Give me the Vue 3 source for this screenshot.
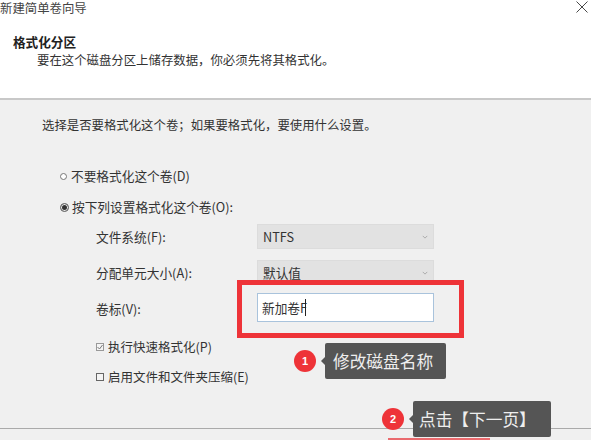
<script setup>
const fields = [
  { label: '文件系统(F):', value: 'NTFS' },
  { label: '分配单元大小(A):', value: '默认值' },
]
</script>

<template>
  <div class="wizard">
    <header class="head">
      <div class="titlebar">
        <span class="title">新建简单卷向导</span>
        <svg class="close" viewBox="0 0 12 12" width="12" height="12"><path d="M.5.5l11 11M11.500.5l-11 11" stroke="#333" stroke-width=".9" fill="none" /></svg>
      </div>
      <h1 class="heading">格式化分区</h1>
      <p class="sub">要在这个磁盘分区上储存数据，你必须先将其格式化。</p>
    </header>

    <main class="body">
      <p class="intro">选择是否要格式化这个卷；如果要格式化，要使用什么设置。</p>

      <div class="option first"><span class="radio"></span>不要格式化这个卷(D)</div>
      <div class="option second"><span class="radio on"></span>按下列设置格式化这个卷(O):</div>

      <div class="form">
        <template v-for="f in fields" :key="f.label">
          <label class="lab">{{ f.label }}</label>
          <div class="select">
            <span>{{ f.value }}</span>
            <svg viewBox="0 0 8 5" width="6" height="4"><path d="M1 1l3 3 3-3" stroke="#999" fill="none" /></svg>
          </div>
        </template>
        <label class="lab">卷标(V):</label>
        <div class="highlight">
          <div class="input">新加卷F<i class="caret"></i></div>
        </div>
      </div>

      <div class="check first-check">
        <span class="box"><svg viewBox="0 0 8 8" width="8" height="8"><path d="M1.500 4l2 2 3-4" stroke="#777" fill="none" /></svg></span>执行快速格式化(P)
      </div>
      <div class="check"><span class="box dark"></span>启用文件和文件夹压缩(E)</div>

      <div class="note n1"><b class="dot">1</b><span class="tip">修改磁盘名称</span></div>
      <div class="note n2"><b class="dot">2</b><span class="tip">点击【下一页】</span></div>
    </main>

    <footer class="foot"><div class="next"></div></footer>
  </div>
</template>

<style scoped>
.wizard {
  width: 591px;
  height: 440px;
  overflow: hidden;
  background: #f0f0f0;
  color: #333;
  font-family: "Noto Sans CJK SC", "Liberation Sans", sans-serif;
  display: flex;
  flex-direction: column;
}
.head {
  height: 98px;
  flex: none;
  background: #fff;
  border-bottom: 2px solid #c8c8c8;
  box-sizing: content-box;
}
.titlebar {
  height: 12px;
  padding-top: 1px;
  display: flex;
  justify-content: space-between;
  align-items: flex-start;
  padding-right: 3px;
}
.title {
  font-size: 12.400px;
  line-height: 14px;
  color: #444;
}
.heading {
  margin: 22px 0 0 13px;
  font-size: 12.600px;
  line-height: 14px;
  font-weight: 700;
  color: #222;
}
.sub {
  margin: 4px 0 0 37px;
  font-size: 12.400px;
  line-height: 14px;
}
.body {
  flex: 1;
  position: relative;
  min-height: 0;
  padding-top: 18px;
}
.intro {
  margin: 0 0 0 42px;
  font-size: 12.400px;
  line-height: 14px;
}
.option {
  display: flex;
  align-items: center;
  margin-left: 60px;
  font-size: 12.700px;
  line-height: 16px;
}
.first { margin-top: 36px; }
.second { margin-top: 15px; }
.radio {
  width: 7px;
  height: 7px;
  border: 1px solid #777;
  border-radius: 50%;
  margin-right: 4px;
  box-sizing: border-box;
  background: #fff;
  flex: none;
}
.radio.on {
  background: #333;
  box-shadow: inset 0 0 0 1px #f0f0f0;
  width: 9px;
  height: 9px;
  margin-right: 3px;
}
.form {
  margin: 9px 0 0 96px;
  display: grid;
  grid-template-columns: 161px 177px;
  align-items: center;
  row-gap: 11px;
}
.lab {
  font-size: 12.700px;
  line-height: 16px;
}
.select {
  height: 25px;
  box-sizing: border-box;
  background: #e2e2e2;
  border: 1px solid #dcdcdc;
  padding: 0 5px;
  display: flex;
  justify-content: space-between;
  align-items: center;
  font-size: 12.700px;
}
.highlight {
  position: relative;
  height: 29px;
  margin-top: -3px;
}
.highlight::before {
  content: "";
  position: absolute;
  left: -20px;
  top: -13px;
  width: 227px;
  height: 58px;
  box-sizing: border-box;
  border: 5px solid #ee3338;
}
.input {
  position: relative;
  height: 29px;
  box-sizing: border-box;
  background: #fff;
  border: 1px solid #a9c3dc;
  padding-left: 4px;
  font-size: 12.700px;
  display: flex;
  align-items: center;
}
.caret {
  width: 1px;
  height: 17px;
  background: #222;
  margin-left: -2px;
}
.check {
  display: flex;
  align-items: center;
  margin: 14px 0 0 96px;
  font-size: 12.500px;
  line-height: 16px;
}
.first-check { margin-top: 17px; }
.box {
  width: 8px;
  height: 8px;
  border: 1px solid #999;
  box-sizing: border-box;
  margin-right: 4px;
  flex: none;
  display: flex;
  background: #f4f4f4;
}
.box svg { margin: -1px; }
.box.dark { border-color: #666; }
.note {
  position: absolute;
  z-index: 1;
  display: flex;
  align-items: center;
  height: 36px;
}
.n1 { left: 294px; top: 243px; }
.n2 { left: 382px; top: 301px; }
.dot {
  width: 22px;
  height: 22px;
  border-radius: 50%;
  background: #ee3338;
  color: #fff;
  font: 700 11px/22px "Liberation Sans", sans-serif;
  text-align: center;
  margin-right: 9px;
  flex: none;
}
.tip {
  position: relative;
  height: 36px;
  padding: 0 13px 0 8px;
  background: #555;
  border-radius: 2px;
  color: #eee;
  font-size: 16.700px;
  line-height: 36px;
  white-space: nowrap;
}
.n2 .tip { padding: 0 15px 0 6px; }
.tip::before {
  content: "";
  position: absolute;
  left: -4px;
  top: 14px;
  border: 4px solid transparent;
  border-left: 0;
  border-right-color: #555;
}
.foot {
  height: 12px;
  flex: none;
  border-top: 1px solid #aaa;
  box-sizing: border-box;
  position: relative;
}
.next {
  position: absolute;
  left: 388px;
  top: 9px;
  width: 102px;
  height: 3px;
  background: #ea6a6e;
}
</style>
<style>
html, body { margin: 0; }
</style>
